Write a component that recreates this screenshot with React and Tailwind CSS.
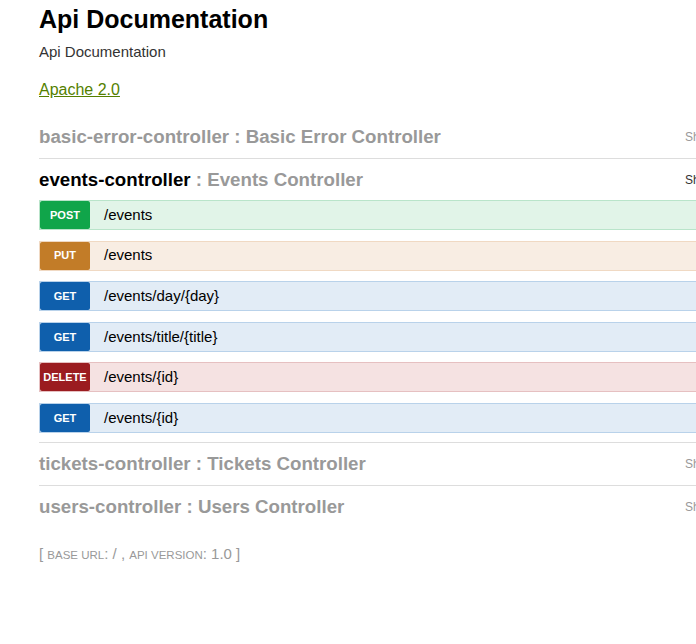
import React from 'react';

const ops = [
  { method: 'POST', path: '/events', row: 'bg-[#e1f4e8] border-[#b9e4ca]', badge: 'bg-[#10a54a]' },
  { method: 'PUT', path: '/events', row: 'bg-[#f8ede3] border-[#f0d9c3]', badge: 'bg-[#c27c28]' },
  { method: 'GET', path: '/events/day/{day}', row: 'bg-[#e2ecf6] border-[#b9d2ea]', badge: 'bg-[#0f5fac]' },
  { method: 'GET', path: '/events/title/{title}', row: 'bg-[#e2ecf6] border-[#b9d2ea]', badge: 'bg-[#0f5fac]' },
  { method: 'DELETE', path: '/events/{id}', row: 'bg-[#f5e2e2] border-[#e6c0c1]', badge: 'bg-[#9b1c20]' },
  { method: 'GET', path: '/events/{id}', row: 'bg-[#e2ecf6] border-[#b9d2ea]', badge: 'bg-[#0f5fac]' },
];

function ControllerHeading({ name, desc, active }) {
  return (
    <div className="flex items-center h-[42px]">
      <h2 className="w-[646px] shrink-0 text-[18.7px] font-bold leading-none whitespace-nowrap">
        <span className={active ? 'text-black' : 'text-[#999]'}>{name}</span>
        <span className="text-[#999]"> : {desc}</span>
      </h2>
      <span className={`text-[12px] whitespace-nowrap ${active ? 'text-[#333]' : 'text-[#999]'}`}>Show/Hide</span>
    </div>
  );
}

export default function App() {
  return (
    <div className="w-[696px] h-[644px] overflow-hidden bg-white" style={{ fontFamily: '"Liberation Sans", Arial, sans-serif' }}>
      <div className="pl-[39px] w-[900px]">
        <h1 className="text-[25px] font-bold text-black leading-none pt-[7px]">Api Documentation</h1>
        <p className="text-[15px] text-[#333] mt-[12px] leading-none">Api Documentation</p>
        <a href="#" className="inline-block text-[16px] text-[#547f00] underline mt-[23px] leading-none">Apache 2.0</a>

        <div className="mt-[14px]">
          <div className="border-b border-[#ddd]">
            <ControllerHeading name="basic-error-controller" desc="Basic Error Controller" />
          </div>
          <div className="border-b border-[#ddd] pb-[9px]">
            <ControllerHeading name="events-controller" desc="Events Controller" active />
            <div className="flex flex-col gap-[10.6px] -mt-[1px]">
              {ops.map((op, i) => (
                <div key={i} className={`flex items-center h-[30px] border ${op.row}`}>
                  <span className={`${op.badge} text-white text-[11px] font-bold w-[50px] h-[28px] flex items-center justify-center rounded-[2px]`}>
                    {op.method}
                  </span>
                  <span className="text-[15px] text-black ml-[14px]">{op.path}</span>
                </div>
              ))}
            </div>
          </div>
          <div className="border-b border-[#ddd]">
            <ControllerHeading name="tickets-controller" desc="Tickets Controller" />
          </div>
          <ControllerHeading name="users-controller" desc="Users Controller" />
        </div>

        <p className="text-[#999] text-[15px] mt-[18px] leading-none">
          [ <span className="text-[11.5px] uppercase">Base url</span>: / , <span className="text-[11.5px] uppercase">api version</span>: 1.0 ]
        </p>
      </div>
    </div>
  );
}
